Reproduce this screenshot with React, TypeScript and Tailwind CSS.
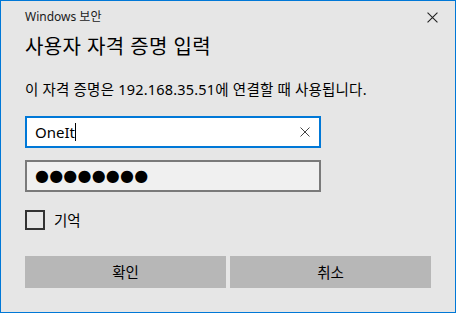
import React from "react";

const FONT = "font-['Noto_Sans','Noto_Sans_CJK_KR',sans-serif]";

function CloseIcon({ size, color }: { size: number; color: string }) {
  return (
    <svg width={size} height={size} viewBox="0 0 10 10" fill="none">
      <path d="M0.5 0.5 L9.5 9.5 M9.5 0.5 L0.5 9.5" stroke={color} strokeWidth="1" />
    </svg>
  );
}

export default function App() {
  return (
    <div
      className={`w-[456px] h-[313px] border border-[#0078d7] bg-[#e6e6e6] flex flex-col px-[24px] text-black ${FONT}`}
    >
      {/* Title bar */}
      <div className="flex items-center justify-between pt-[8px] h-[24px]">
        <span className="text-[12px] leading-[16px] text-[#1a1a1a]">Windows 보안</span>
        <div className="mr-[-7px]">
          <CloseIcon size={11} color="#222" />
        </div>
      </div>

      <h1 className="mt-[8px] text-[20px] leading-[28px] font-normal tracking-[0.4px]">사용자 자격 증명 입력</h1>

      <p className="mt-[18px] text-[14.5px] leading-[20px] tracking-[0.2px]">
        이 자격 증명은 192.168.35.51에 연결할 때 사용됩니다.
      </p>

      {/* Username */}
      <div className="mt-[17px] w-[296px] h-[32px] border-2 border-[#0078d7] bg-white flex items-center pl-[8px] pr-[9px]">
        <span className="text-[15px] leading-[20px]">OneIt</span>
        <span className="w-px h-[18px] bg-black" />
        <div className="ml-auto">
          <CloseIcon size={10} color="#444" />
        </div>
      </div>

      {/* Password */}
      <div className="mt-[12px] w-[296px] h-[32px] border-2 border-[#7a7a7a] bg-[#f0f0f0] flex items-center pl-[8px]">
        <span className="font-['DejaVu_Sans',sans-serif] text-[16px] leading-[20px] tracking-[0.2px]">
          ●●●●●●●●
        </span>
      </div>

      {/* Remember */}
      <label className="mt-[18px] flex items-center gap-[9px] h-[20px]">
        <span className="w-[20px] h-[20px] border-2 border-[#333333]" />
        <span className="text-[14.5px] leading-[20px]">기억</span>
      </label>

      {/* Buttons */}
      <div className="mt-[26px] grid grid-cols-2 gap-[4px]">
        <button className="h-[32px] bg-[#b7b7b7] text-[14.5px] leading-[20px]">확인</button>
        <button className="h-[32px] bg-[#b7b7b7] text-[14.5px] leading-[20px]">취소</button>
      </div>
    </div>
  );
}
